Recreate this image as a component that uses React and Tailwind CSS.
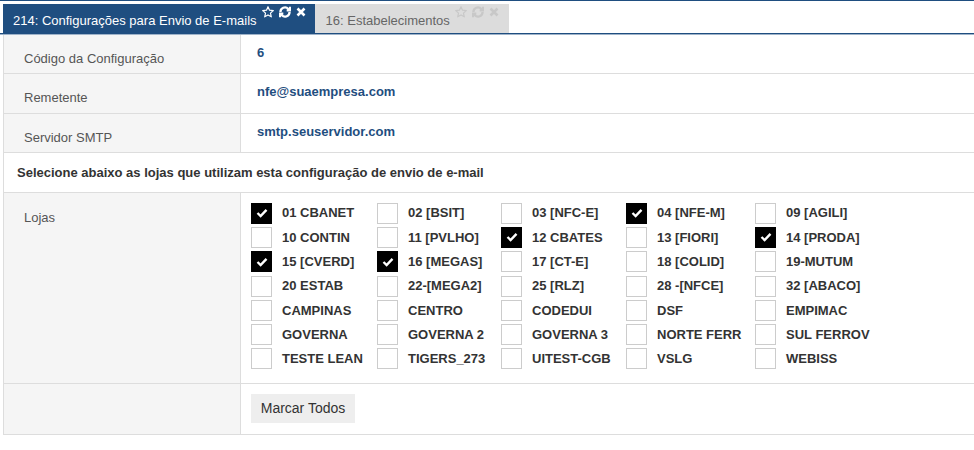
const lojas = [
  ['01 CBANET', true], ['02 [BSIT]', false], ['03 [NFC-E]', false], ['04 [NFE-M]', true], ['09 [AGILI]', false],
  ['10 CONTIN', false], ['11 [PVLHO]', false], ['12 CBATES', true], ['13 [FIORI]', false], ['14 [PRODA]', true],
  ['15 [CVERD]', true], ['16 [MEGAS]', true], ['17 [CT-E]', false], ['18 [COLID]', false], ['19-MUTUM', false],
  ['20 ESTAB', false], ['22-[MEGA2]', false], ['25 [RLZ]', false], ['28 -[NFCE]', false], ['32 [ABACO]', false],
  ['CAMPINAS', false], ['CENTRO', false], ['CODEDUI', false], ['DSF', false], ['EMPIMAC', false],
  ['GOVERNA', false], ['GOVERNA 2', false], ['GOVERNA 3', false], ['NORTE FERR', false], ['SUL FERROV', false],
  ['TESTE LEAN', false], ['TIGERS_273', false], ['UITEST-CGB', false], ['VSLG', false], ['WEBISS', false],
];

const fields = [
  { label: 'Código da Configuração', value: '6', h: 'h-[39px]' },
  { label: 'Remetente', value: 'nfe@suaempresa.com', h: 'h-[40px]' },
  { label: 'Servidor SMTP', value: 'smtp.seuservidor.com', h: 'h-[39px]' },
];

// star-o / refresh / times, drawn small like the font icons in the tab header
function TabIcons({ color }) {
  return (
    <div className={`flex items-start gap-[5px] self-start pt-[1px] ${color}`}>
      <svg width="12" height="12" viewBox="0 0 12 12">
        <polygon
          points="6,0.7 7.53,4.2 11.33,4.57 8.47,7.1 9.29,10.83 6,8.9 2.71,10.83 3.53,7.1 0.67,4.57 4.47,4.2"
          fill="none" stroke="currentColor" strokeWidth="1.2" strokeLinejoin="round"
        />
      </svg>
      <svg width="12" height="12" viewBox="1.5 1.5 21 21" fill="none" stroke="currentColor" strokeWidth="4" strokeLinecap="butt" strokeLinejoin="miter">
        <path d="M4 12a8 8 0 0 1 13.6-5.7L20 8.5" />
        <path d="M21 3v6h-6" fill="currentColor" />
        <path d="M20 12a8 8 0 0 1-13.6 5.7L4 15.5" />
        <path d="M3 21v-6h6" fill="currentColor" />
      </svg>
      <svg width="10" height="10" viewBox="0 0 10 10" className="mt-[1px]">
        <path d="M1.5 1.5L8.5 8.5M8.5 1.5L1.5 8.5" stroke="currentColor" strokeWidth="2.6" />
      </svg>
    </div>
  );
}

function Checkbox({ checked }) {
  if (checked) {
    return (
      <div className="w-[21px] h-[21px] bg-black flex items-center justify-center shrink-0">
        <svg width="12" height="10" viewBox="0 0 12 10">
          <polyline points="1.5,5 4.6,8 10.5,1.8" fill="none" stroke="#fff" strokeWidth="2.4" />
        </svg>
      </div>
    );
  }
  return <div className="w-[21px] h-[21px] bg-white border border-[#cccccc] shrink-0" />;
}

export default function App() {
  return (
    <div className="w-[974px] h-[450px] bg-white overflow-hidden font-['Liberation_Sans',Arial,sans-serif]">
      <div className="h-px bg-[#1f4e80]" />
      <div className="flex mt-[3px] pl-[3px] h-[29px]">
        <div className="flex items-end gap-[5px] bg-[#1f4e80] pl-[10px] pr-[9px] pb-[4px] pt-[1px]">
          <span className="text-[13px] leading-[16px] text-white whitespace-nowrap">214: Configurações para Envio de E-mails</span>
          <TabIcons color="text-white" />
        </div>
        <div className="flex items-end gap-[5px] bg-[#dcdcdc] pl-[11px] pr-[10px] pb-[4px] pt-[1px]">
          <span className="text-[13px] leading-[16px] text-[#666] whitespace-nowrap">16: Estabelecimentos</span>
          <TabIcons color="text-[#c8c8c8]" />
        </div>
      </div>
      <div className="h-px bg-[#1f4e80]" />
      <div className="h-px bg-[#9fb3c9]" />

      <div className="ml-[3px] border-l border-[#dddddd]">
        {fields.map((f) => (
          <div key={f.label} className={`grid grid-cols-[237px_1fr] border-b border-[#dddddd] ${f.h}`}>
            <div className="bg-[#f5f5f5] border-r border-[#dddddd] pl-[20px] pt-[16px] text-[13px] leading-[15px] text-[#555]">{f.label}</div>
            <div className="pl-[16px] pt-[10px] text-[13px] leading-[15px] font-bold text-[#1f4e80]">{f.value}</div>
          </div>
        ))}

        <div className="h-[40px] border-b border-[#dddddd] flex items-center pl-[13px] text-[13px] font-bold text-[#333]">
          Selecione abaixo as lojas que utilizam esta configuração de envio de e-mail
        </div>

        <div className="grid grid-cols-[237px_1fr] border-b border-[#dddddd] h-[191px]">
          <div className="bg-[#f5f5f5] border-r border-[#dddddd] pl-[20px] pt-[17px] text-[13px] leading-[15px] text-[#555]">Lojas</div>
          <div className="pl-[10px] pt-[8px]">
            <div className="grid grid-cols-[126px_124px_125px_129px_160px] auto-rows-[24.3px]">
              {lojas.map(([name, checked]) => (
                <div key={name} className="flex items-center gap-[10px]">
                  <Checkbox checked={checked} />
                  <span className="text-[13px] font-bold text-[#333] whitespace-nowrap">{name}</span>
                </div>
              ))}
            </div>
          </div>
        </div>

        <div className="grid grid-cols-[237px_1fr] border-b border-[#dddddd] h-[51px]">
          <div className="bg-[#f5f5f5] border-r border-[#dddddd]" />
          <div className="pl-[10px] pt-[10px]">
            <button className="h-[29px] w-[104px] bg-[#eeeeee] text-[14px] text-[#333]">Marcar Todos</button>
          </div>
        </div>
      </div>
    </div>
  );
}
